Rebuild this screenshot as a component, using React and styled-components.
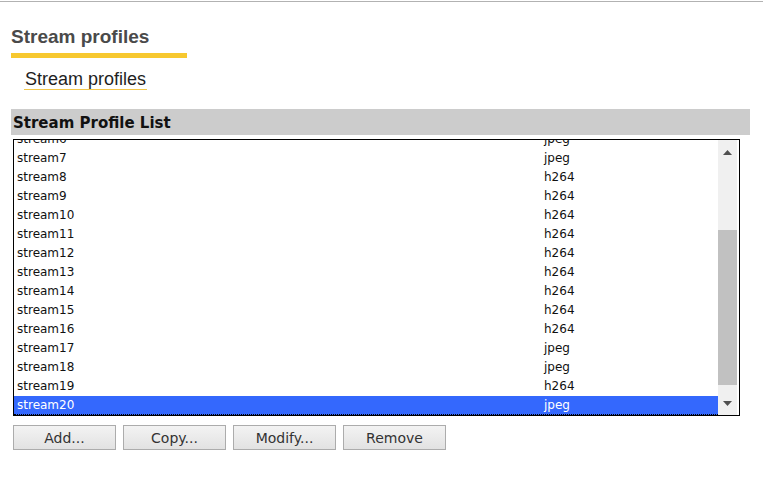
import React, { useLayoutEffect, useRef } from 'react';
import styled, { createGlobalStyle } from 'styled-components';

const GlobalStyle = createGlobalStyle`
    body {
        margin: 0;
        background: #fff;
    }
`;

const Page = styled.div`
    padding-top: 1px;
`;

const TopRule = styled.div`
    height: 1px;
    background: #b2b2b2;
`;

const Content = styled.div`
    padding: 0 0 0 11px;
`;

const Title = styled.h1`
    box-sizing: border-box;
    width: 176px;
    margin: 24px 0 0;
    padding-bottom: 5px;
    font-family: "Liberation Sans", Arial, sans-serif;
    font-size: 19px;
    font-weight: bold;
    line-height: 22px;
    color: #4a4a4a;
    border-bottom: 5px solid #f7c82f;
`;

const SubTitle = styled.div`
    display: inline-block;
    margin: 11px 0 0 13px;
    padding: 0 1px 0 1px;
    font-family: "Liberation Sans", Arial, sans-serif;
    font-size: 18px;
    line-height: 20px;
    color: #1e1e1e;
    border-bottom: 1px solid #f1c64a;
`;

const Section = styled.section`
    width: 739px;
    margin-top: 19px;
`;

const SectionHeader = styled.div`
    height: 26px;
    padding: 0 2px;
    background: #cccccc;
    font-family: "DejaVu Sans", Verdana, sans-serif;
    font-size: 15px;
    font-weight: bold;
    line-height: 28px;
    color: #111;
`;

const ListBox = styled.div`
    box-sizing: border-box;
    display: flex;
    width: 727px;
    height: 277px;
    margin: 4px 0 0 2px;
    border: 1px solid #000;
`;

const Viewport = styled.div`
    flex: 1;
    overflow: hidden;
`;

const Row = styled.div`
    box-sizing: border-box;
    display: grid;
    grid-template-columns: 527px 1fr;
    height: 19px;
    padding-left: 3px;
    font-family: "DejaVu Sans", Verdana, sans-serif;
    font-size: 12px;
    line-height: 19px;
    color: ${p => (p.$selected ? '#fff' : '#111')};
    background: ${p => (p.$selected ? '#3468fd' : 'transparent')};
    border-bottom: ${p => (p.$selected ? '1px dotted #000' : 'none')};
`;

const ScrollBar = styled.div`
    display: flex;
    flex-direction: column;
    width: 19px;
    margin-right: 2px;
    background: #f0f0f0;
`;

const ArrowButton = styled.div`
    display: flex;
    justify-content: center;
    align-items: center;
    height: ${p => p.$height}px;
    padding-top: ${p => p.$offset || 0}px;
    box-sizing: border-box;
`;

const Track = styled.div`
    flex: 1;
    display: flex;
    flex-direction: column;
    justify-content: flex-end;
`;

const Thumb = styled.div`
    height: 155px;
    background: #c1c1c1;
`;

const ButtonRow = styled.div`
    display: flex;
    gap: 7px;
    margin: 9px 0 0 2px;
`;

const Button = styled.button`
    box-sizing: border-box;
    width: 103px;
    height: 25px;
    padding: 0;
    border: 1px solid #acacac;
    border-radius: 0;
    background: linear-gradient(#f3f3f3, #e2e2e2);
    font-family: "DejaVu Sans", Verdana, sans-serif;
    font-size: 14px;
    color: #333;
`;

const Arrow = ({ up }) => (
    <svg width="9" height="5" viewBox="0 0 9 5">
        <path d={up ? 'M0 5 L4.5 0 L9 5 Z' : 'M0 0 L9 0 L4.5 5 Z'} fill="#505050" />
    </svg>
);

const profiles = [
    ['stream1', 'h264'],
    ['stream2', 'jpeg'],
    ['stream3', 'h264'],
    ['stream4', 'jpeg'],
    ['stream5', 'h264'],
    ['stream6', 'jpeg'],
    ['stream7', 'jpeg'],
    ['stream8', 'h264'],
    ['stream9', 'h264'],
    ['stream10', 'h264'],
    ['stream11', 'h264'],
    ['stream12', 'h264'],
    ['stream13', 'h264'],
    ['stream14', 'h264'],
    ['stream15', 'h264'],
    ['stream16', 'h264'],
    ['stream17', 'jpeg'],
    ['stream18', 'jpeg'],
    ['stream19', 'h264'],
    ['stream20', 'jpeg'],
];

const App = () => {
    const listRef = useRef(null);
    const selected = 'stream20';

    // La selección queda al final de la lista
    useLayoutEffect(() => {
        const el = listRef.current;
        if (el) el.scrollTop = el.scrollHeight;
    }, []);

    return (
        <Page>
            <GlobalStyle />
            <TopRule />
            <Content>
                <Title>Stream profiles</Title>
                <SubTitle>Stream profiles</SubTitle>
                <Section>
                    <SectionHeader>Stream Profile List</SectionHeader>
                    <ListBox>
                        <Viewport ref={listRef}>
                            {profiles.map(([name, codec]) => (
                                <Row key={name} $selected={name === selected}>
                                    <span>{name}</span>
                                    <span>{codec}</span>
                                </Row>
                            ))}
                        </Viewport>
                        <ScrollBar>
                            <ArrowButton $height={24}><Arrow up /></ArrowButton>
                            <Track><Thumb /></Track>
                            <ArrowButton $height={30} $offset={6}><Arrow /></ArrowButton>
                        </ScrollBar>
                    </ListBox>
                    <ButtonRow>
                        <Button>Add...</Button>
                        <Button>Copy...</Button>
                        <Button>Modify...</Button>
                        <Button>Remove</Button>
                    </ButtonRow>
                </Section>
            </Content>
        </Page>
    );
};

export default App;
